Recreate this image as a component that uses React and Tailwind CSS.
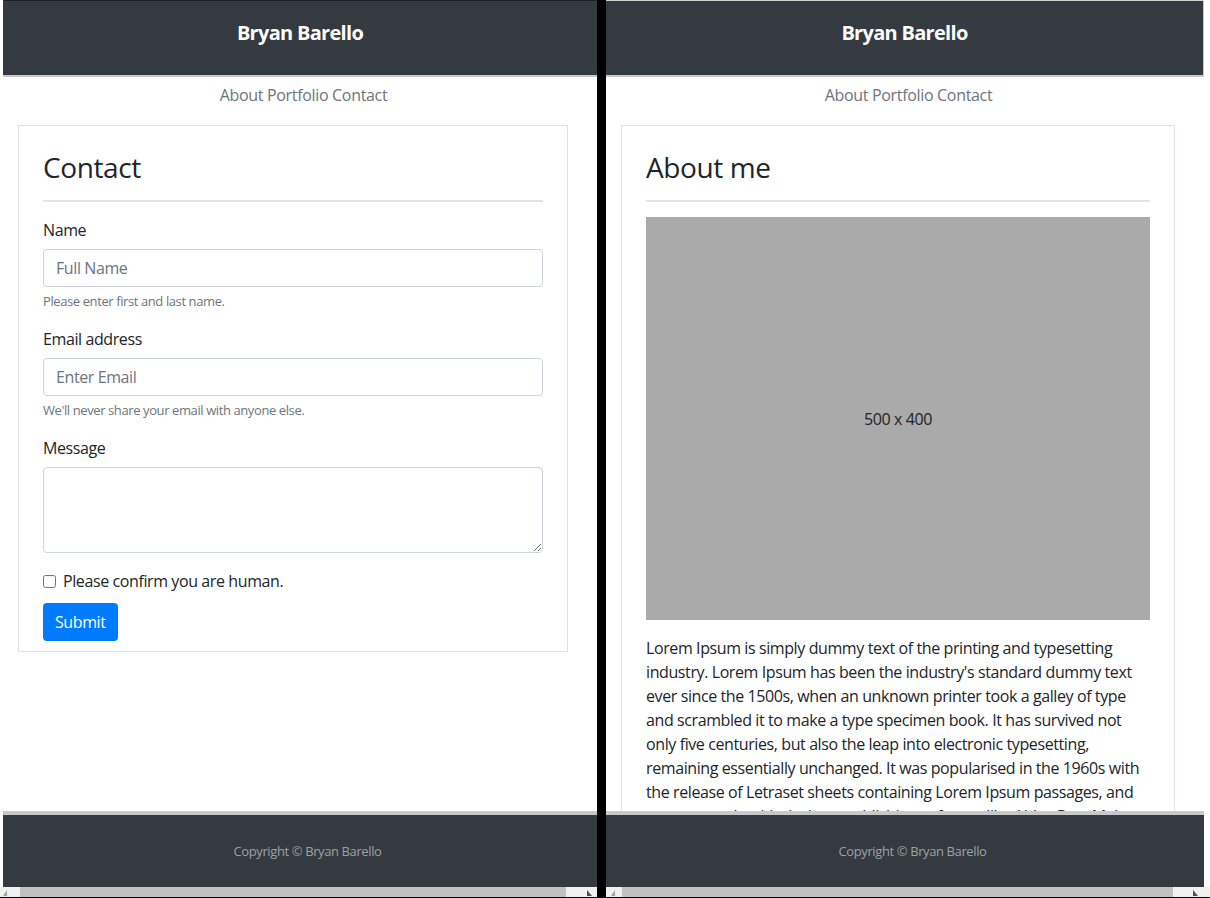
import React from 'react';

const aboutLines = [
    'Lorem Ipsum is simply dummy text of the printing and typesetting',
    "industry. Lorem Ipsum has been the industry's standard dummy text",
    'ever since the 1500s, when an unknown printer took a galley of type',
    'and scrambled it to make a type specimen book. It has survived not',
    'only five centuries, but also the leap into electronic typesetting,',
    'remaining essentially unchanged. It was popularised in the 1960s with',
    'the release of Letraset sheets containing Lorem Ipsum passages, and',
    'more recently with desktop publishing software like Aldus PageMaker',
];

const Header = ({ extra }) => (
    <div className={`h-[77px] shrink-0 border-t bg-[#343a40] border-b-2 border-b-[#c8c8c8] pt-[18px] text-center ${extra}`}>
        <span className="text-[20px] leading-[28px] font-bold text-white tracking-[-0.035em]">Bryan Barello</span>
    </div>
);

const Nav = () => (
    <div className="mt-[6px] h-[24px] shrink-0 text-center text-[16px] leading-[24px] text-[#6c757d] tracking-[-0.02em] pl-[7px]">
        About Portfolio Contact
    </div>
);

const Footer = () => (
    <div className="h-[76px] shrink-0 border-t-4 border-t-[#c8c8c8] bg-[#343a40] flex items-center justify-center pt-[2px] pl-[15px]">
        <span className="text-[13px] text-[#9ea1a5] tracking-[-0.03em]">Copyright © Bryan Barello</span>
    </div>
);

const ArrowLeft = () => (
    <svg width="5" height="6" viewBox="0 0 5 6"><path d="M4 0 L4 6 L0 6 Z" fill="#a3a3a3" /></svg>
);

const ArrowRight = () => (
    <svg width="5" height="6" viewBox="0 0 5 6"><path d="M0 0 L0 6 L5 6 Z" fill="#505050" /></svg>
);

const Field = ({ label, placeholder, help }) => (
    <div className="mb-[16px]">
        <label className="block text-[16px] leading-[24px] text-[#212529] mb-[7px]">{label}</label>
        <input
            type="text"
            placeholder={placeholder}
            className="block w-full h-[38px] px-[12px] rounded-[4px] border border-[#ced4da] text-[16px] text-[#495057] placeholder:text-[#6c757d] outline-none"
        />
        <p className="mt-[5px] text-[13px] leading-[19px] text-[#6c757d]">{help}</p>
    </div>
);

const ContactCard = () => (
    <div className="ml-[15px] mr-[29px] mt-[18px] border border-[#dee2e6] px-[24px] pt-[24px] pb-[10px]">
        <h2 className="text-[28px] leading-[34px] font-medium text-[#212529]">Contact</h2>
        <hr className="mt-[16px] mb-[16px] border-t-2 border-[#e5e5e5]" />
        <Field label="Name" placeholder="Full Name" help="Please enter first and last name." />
        <Field label="Email address" placeholder="Enter Email" help="We'll never share your email with anyone else." />
        <div className="mb-[16px]">
            <label className="block text-[16px] leading-[24px] text-[#212529] mb-[7px]">Message</label>
            <textarea rows={3} className="block w-full h-[86px] px-[12px] py-[6px] rounded-[4px] border border-[#ced4da] outline-none" />
        </div>
        <div className="flex items-center h-[24px]">
            <input type="checkbox" className="w-[13px] h-[13px] m-0" />
            <span className="ml-[7px] text-[16px] leading-[24px] text-[#212529]">Please confirm you are human.</span>
        </div>
        <button className="mt-[10px] h-[38px] px-[12px] rounded-[4px] bg-[#007bff] text-white text-[16px]">Submit</button>
    </div>
);

const AboutCard = () => (
    <div className="ml-[15px] mr-[29px] mt-[18px] border border-[#dee2e6] px-[24px] pt-[24px] pb-[24px]">
        <h2 className="text-[28px] leading-[34px] font-medium text-[#212529]">About me</h2>
        <hr className="mt-[16px] mb-[15px] border-t-2 border-[#e5e5e5]" />
        <div className="h-[403px] bg-[#aaaaaa] flex items-center justify-center text-[16px] text-[#222]">500 x 400</div>
        <div className="mt-[16px] text-[16px] leading-[24px] text-[#212529]">
            {aboutLines.map((line) => (
                <div key={line} className="whitespace-nowrap">{line}</div>
            ))}
        </div>
    </div>
);

export default function App() {
    return (
        <div className="w-[1210px] h-[898px] bg-black overflow-hidden font-['Open_Sans',sans-serif] tracking-[-0.025em]">
            <div className="flex h-[897px]">
                {/* left window */}
                <div className="w-[597px] flex flex-col bg-white">
                    <div className="flex-1 min-h-0 flex flex-col pl-[3px]">
                        <Header extra="border-t-[#1e2124]" />
                        <Nav />
                        <div className="flex-1 min-h-0 overflow-hidden">
                            <ContactCard />
                        </div>
                        <Footer />
                    </div>
                    <div className="flex h-[10px] shrink-0 bg-[#f0f0f0]">
                        <div className="w-[20px] flex items-end pl-[3px] pb-[1px]"><ArrowLeft /></div>
                        <div className="w-[546px] bg-[#c1c1c1]" />
                        <div className="flex-1 flex items-end justify-end pr-[5px] pb-[1px]"><ArrowRight /></div>
                    </div>
                </div>

                <div className="w-[9px]" />

                {/* right window */}
                <div className="w-[604px] flex flex-col bg-white">
                    <div className="flex-1 min-h-0 flex flex-col">
                        <Header extra="mr-[6px] border-t-[#d0d0d0] border-r border-r-[#c8c8c8]" />
                        <div className="mr-[6px]">
                            <Nav />
                        </div>
                        <div className="flex-1 min-h-0 overflow-hidden mr-[6px]">
                            <AboutCard />
                        </div>
                        <div className="mr-[6px]">
                            <Footer />
                        </div>
                    </div>
                    <div className="flex h-[10px] shrink-0 bg-[#f0f0f0]">
                        <div className="w-[16px] flex items-end pl-[5px] pb-[1px]"><ArrowLeft /></div>
                        <div className="w-[551px] bg-[#c1c1c1]" />
                        <div className="flex-1 flex items-end justify-end pr-[12px] pb-[1px]"><ArrowRight /></div>
                    </div>
                </div>
            </div>
        </div>
    );
}
